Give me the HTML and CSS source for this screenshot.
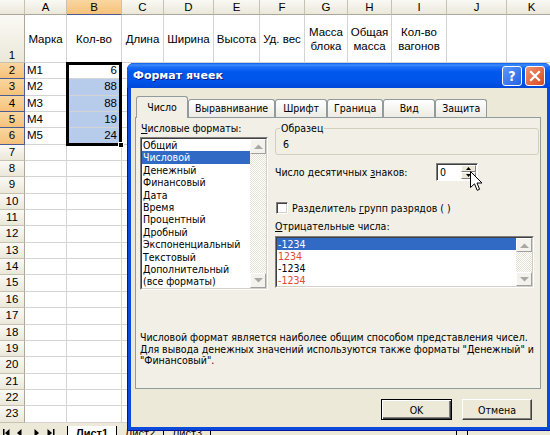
FILE: index.html
```html
<!DOCTYPE html>
<html lang="ru">
<head>
<meta charset="utf-8">
<title>Формат ячеек</title>
<link rel="stylesheet" href="styles.css">
</head>
<body>
<div class="excel">
  <div class="sheet">
    <div class="ch"></div><div class="ch">A</div><div class="ch on">B</div><div class="ch">C</div><div class="ch">D</div><div class="ch">E</div><div class="ch">F</div><div class="ch">G</div><div class="ch">H</div><div class="ch">I</div><div class="ch">J</div><div class="ch">K</div>
    <div class="rh r1h">1</div><div class="r1">Марка</div><div class="r1">Кол-во</div><div class="r1">Длина</div><div class="r1">Ширина</div><div class="r1">Высота</div><div class="r1">Уд. вес</div><div class="r1">Масса<br>блока</div><div class="r1">Общая<br>масса</div><div class="r1">Кол-во<br>вагонов</div><div class="r1"></div><div class="r1"></div>
    <div class="rh on">2</div><div>М1</div><div class="num">6</div><div></div><div></div><div></div><div></div><div></div><div></div><div></div><div></div><div></div>
    <div class="rh on">3</div><div>М2</div><div class="num hl">88</div><div></div><div></div><div></div><div></div><div></div><div></div><div></div><div></div><div></div>
    <div class="rh on">4</div><div>М3</div><div class="num hl">88</div><div></div><div></div><div></div><div></div><div></div><div></div><div></div><div></div><div></div>
    <div class="rh on">5</div><div>М4</div><div class="num hl">19</div><div></div><div></div><div></div><div></div><div></div><div></div><div></div><div></div><div></div>
    <div class="rh on">6</div><div>М5</div><div class="num hl">24</div><div></div><div></div><div></div><div></div><div></div><div></div><div></div><div></div><div></div>
    <div class="rh">7</div><div></div><div></div><div></div><div></div><div></div><div></div><div></div><div></div><div></div><div></div><div></div>
    <div class="rh">8</div><div></div><div></div><div></div><div></div><div></div><div></div><div></div><div></div><div></div><div></div><div></div>
    <div class="rh">9</div><div></div><div></div><div></div><div></div><div></div><div></div><div></div><div></div><div></div><div></div><div></div>
    <div class="rh">10</div><div></div><div></div><div></div><div></div><div></div><div></div><div></div><div></div><div></div><div></div><div></div>
    <div class="rh">11</div><div></div><div></div><div></div><div></div><div></div><div></div><div></div><div></div><div></div><div></div><div></div>
    <div class="rh">12</div><div></div><div></div><div></div><div></div><div></div><div></div><div></div><div></div><div></div><div></div><div></div>
    <div class="rh">13</div><div></div><div></div><div></div><div></div><div></div><div></div><div></div><div></div><div></div><div></div><div></div>
    <div class="rh">14</div><div></div><div></div><div></div><div></div><div></div><div></div><div></div><div></div><div></div><div></div><div></div>
    <div class="rh">15</div><div></div><div></div><div></div><div></div><div></div><div></div><div></div><div></div><div></div><div></div><div></div>
    <div class="rh">16</div><div></div><div></div><div></div><div></div><div></div><div></div><div></div><div></div><div></div><div></div><div></div>
    <div class="rh">17</div><div></div><div></div><div></div><div></div><div></div><div></div><div></div><div></div><div></div><div></div><div></div>
    <div class="rh">18</div><div></div><div></div><div></div><div></div><div></div><div></div><div></div><div></div><div></div><div></div><div></div>
    <div class="rh">19</div><div></div><div></div><div></div><div></div><div></div><div></div><div></div><div></div><div></div><div></div><div></div>
    <div class="rh">20</div><div></div><div></div><div></div><div></div><div></div><div></div><div></div><div></div><div></div><div></div><div></div>
    <div class="rh">21</div><div></div><div></div><div></div><div></div><div></div><div></div><div></div><div></div><div></div><div></div><div></div>
    <div class="rh">22</div><div></div><div></div><div></div><div></div><div></div><div></div><div></div><div></div><div></div><div></div><div></div>
    <div class="rh">23</div><div></div><div></div><div></div><div></div><div></div><div></div><div></div><div></div><div></div><div></div><div></div>
  </div>
  <div class="sel-box"><span class="fill-handle"></span></div>
  <div class="sheet-tabs">
    <svg class="sheet-nav" width="60" height="10" viewBox="0 0 60 10">
      <rect x="2" y="1" width="1.5" height="8" fill="#000"/>
      <polygon points="4,5 8.5,1 8.5,9" fill="#000"/>
      <polygon points="16,5 20.5,1 20.5,9" fill="#000"/>
      <polygon points="38,5 33.5,1 33.5,9" fill="#000"/>
      <polygon points="51,5 46.5,1 46.5,9" fill="#000"/>
      <rect x="52" y="1" width="1.5" height="8" fill="#000"/>
    </svg>
    <span class="stab active">Лист1</span>
    <span class="stab">Лист2</span>
    <span class="stab">Лист3</span>
    <span class="hscroll-btn"></span>
  </div>
</div>

<div class="dialog">
  <div class="titlebar">
    <span class="title">Формат ячеек</span>
    <span class="tb-btn help">?</span>
    <span class="tb-btn close">
      <svg width="12" height="12" viewBox="0 0 12 12"><path d="M2 2 L10 10 M10 2 L2 10" stroke="#fff" stroke-width="2.2" stroke-linecap="square"/></svg>
    </span>
  </div>
  <div class="dlg-body">
    <div class="tabs">
      <div class="tab active">Число</div>
      <div class="tab">Выравнивание</div>
      <div class="tab">Шрифт</div>
      <div class="tab">Граница</div>
      <div class="tab">Вид</div>
      <div class="tab">Защита</div>
    </div>
    <div class="panel">
      <div class="col-left">
        <div class="lbl"><u>Ч</u>исловые форматы:</div>
        <div class="listbox fmt-list">
          <div class="lb-in">
            <ul class="items">
              <li>Общий</li>
              <li class="selected">Числовой</li>
              <li>Денежный</li>
              <li>Финансовый</li>
              <li>Дата</li>
              <li>Время</li>
              <li>Процентный</li>
              <li>Дробный</li>
              <li>Экспоненциальный</li>
              <li>Текстовый</li>
              <li>Дополнительный</li>
              <li>(все форматы)</li>
            </ul>
            <div class="vscroll">
              <span class="sb-btn"><svg width="9" height="5" viewBox="0 0 9 5"><polygon points="0,5 4.5,0.5 9,5" fill="#A9A8A2"/></svg></span>
              <span class="sb-track"></span>
              <span class="sb-btn"><svg width="9" height="5" viewBox="0 0 9 5"><polygon points="0,0 4.5,4.5 9,0" fill="#A9A8A2"/></svg></span>
            </div>
          </div>
        </div>
      </div>
      <div class="col-right">
        <fieldset class="sample">
          <legend>Образец</legend>
          <div class="sample-val">6</div>
        </fieldset>
        <div class="spin-row">
          <span class="spin-lbl">Число десятичных <u>з</u>наков:</span>
          <div class="spin">
            <span class="spin-val">0</span>
            <span class="spin-btns">
              <span class="sp"><svg width="5" height="3" viewBox="0 0 5 3"><polygon points="0,3 2.5,0 5,3" fill="#000"/></svg></span>
              <span class="sp"><svg width="5" height="3" viewBox="0 0 5 3"><polygon points="0,0 2.5,3 5,0" fill="#000"/></svg></span>
            </span>
          </div>
        </div>
        <div class="check-row"><span class="checkbox"></span><span class="check-lbl">Разделитель <u>г</u>рупп разрядов ( )</span></div>
        <div class="lbl neg-lbl"><u>О</u>трицательные числа:</div>
        <div class="listbox neg-list">
          <div class="lb-in">
            <ul class="items">
              <li class="selected">-1234</li>
              <li class="red">1234</li>
              <li>-1234</li>
              <li class="red">-1234</li>
            </ul>
            <div class="vscroll">
              <span class="sb-btn"><svg width="9" height="5" viewBox="0 0 9 5"><polygon points="0,5 4.5,0.5 9,5" fill="#A9A8A2"/></svg></span>
              <span class="sb-track"></span>
              <span class="sb-btn"><svg width="9" height="5" viewBox="0 0 9 5"><polygon points="0,0 4.5,4.5 9,0" fill="#A9A8A2"/></svg></span>
            </div>
          </div>
        </div>
      </div>
      <p class="desc">Числовой формат является наиболее общим способом представления чисел.<br>Для вывода денежных значений используются также форматы "Денежный" и<br>"Финансовый".</p>
    </div>
    <div class="buttons">
      <button class="btn default">OK</button>
      <button class="btn">Отмена</button>
    </div>
  </div>
</div>

<svg class="cursor" width="13" height="21" viewBox="0 0 13 21">
  <path d="M0.5 0.5 L0.5 16.5 L4.5 12.8 L7.2 19.3 L9.6 18.3 L7 12 L12 12 Z" fill="#fff" stroke="#000" stroke-width="1" stroke-linejoin="miter"/>
</svg>
</body>
</html>
```

FILE: styles.css
```css
* { box-sizing: border-box; }
html, body { margin: 0; padding: 0; }
body {
  width: 550px;
  height: 435px;
  overflow: hidden;
  position: relative;
  background: #fff;
  font-family: "Liberation Sans", Arial, sans-serif;
}

/* ---------- spreadsheet ---------- */
.excel { position: relative; }

.sheet {
  display: grid;
  grid-template-columns: 25px 42px 55px 42px 50px 46px 45px 43px 44px 55px 60px 50px;
  grid-template-rows: 15px 48px repeat(22, 16.35px);
  font-size: 11.5px;
  color: #000;
}
.sheet > div {
  border-right: 1px solid #D4D4D4;
  border-bottom: 1px solid #D4D4D4;
  overflow: hidden;
  white-space: nowrap;
  line-height: 15px;
  padding: 0 2px;
}
.sheet > .ch {
  background: linear-gradient(#FAF9F4, #EBE8DA);
  border-right-color: #C5C2B2;
  border-bottom-color: #ACA899;
  text-align: center;
  line-height: 14px;
  padding: 0;
}
.sheet > .rh {
  background: linear-gradient(#FAF9F4, #EBE8DA);
  border-right-color: #ACA899;
  border-bottom-color: #C5C2B2;
  text-align: center;
  padding: 0;
}
.sheet > .on {
  background: linear-gradient(#F9D6A0, #F6C17A);
  border-bottom-color: #4A5C94;
}
.sheet > .rh.on { border-right-color: #4A5C94; }
.sheet > .r1h {
  display: flex;
  align-items: flex-end;
  justify-content: center;
  line-height: 14px;
}
.sheet > .r1 {
  display: flex;
  align-items: center;
  justify-content: center;
  text-align: center;
  line-height: 14px;
  padding: 0;
}
.sheet > .num { text-align: right; padding-right: 4px; }
.sheet > .hl { background: #B7CBEA; }

.sel-box {
  position: absolute;
  left: 66px;
  top: 62px;
  width: 56px;
  height: 84px;
  border: 3px solid #000;
}
.fill-handle {
  position: absolute;
  right: -5px;
  bottom: -5px;
  width: 6px;
  height: 6px;
  background: #000;
  border: 1px solid #fff;
}

.sheet-tabs {
  display: flex;
  align-items: flex-start;
  height: 14px;
  background: #ECE9D8;
  font-size: 11px;
  line-height: 12px;
  padding-top: 3px;
}
.sheet-nav { margin: 2px 6px 0 1px; flex: none; }
.stab {
  padding: 1px 8px 0;
  border-left: 1px solid #000;
  border-right: 1px solid #000;
  margin-right: -1px;
}
.stab.active { background: #fff; font-weight: bold; padding: 1px 8px 0; }
.hscroll-btn {
  margin-left: 246px;
  width: 12px;
  height: 10px;
  border: 1px solid #000;
  border-bottom: none;
  background: #ECE9D8;
}

/* ---------- dialog ---------- */
.dialog {
  position: absolute;
  left: 127px;
  top: 63px;
  width: 424px;
  height: 368px;
  display: flex;
  flex-direction: column;
  background: #0A4BDC;
  border-radius: 7px 7px 0 0;
  box-shadow: inset 1px 0 #00169C, inset 0 -1px #00169C;
  font-family: "DejaVu Sans Condensed", "DejaVu Sans", sans-serif;
  font-stretch: condensed;
  font-size: 10.5px;
  color: #000;
}
.titlebar {
  height: 25px;
  flex: none;
  display: flex;
  align-items: center;
  padding: 0 6px 0 6px;
  border-radius: 7px 7px 0 0;
  background: linear-gradient(#0A5CE6 0, #3D8EFF 2px, #1C6EF5 4px, #0058EE 9px, #0055EA 17px, #0047D9 25px);
}
.title {
  flex: 1;
  color: #fff;
  font-family: "DejaVu Sans", sans-serif;
  font-stretch: normal;
  font-weight: bold;
  font-size: 11px;
  text-shadow: 1px 1px #0A1883;
}
.tb-btn {
  width: 20px;
  height: 20px;
  border: 1px solid #fff;
  border-radius: 3px;
  display: flex;
  align-items: center;
  justify-content: center;
  color: #fff;
  font-family: "DejaVu Sans", sans-serif;
  font-weight: bold;
  font-size: 14px;
  line-height: 1;
}
.help { background: linear-gradient(135deg, #5B98FA, #2562E2); margin-right: 3px; }
.close { background: linear-gradient(135deg, #EE9472, #D8491F); }

.dlg-body {
  flex: 1;
  margin: 0 4px 4px 4px;
  background: #ECE9D8;
  display: flex;
  flex-direction: column;
  padding: 8px 6px 7px 4px;
}

.tabs {
  display: flex;
  align-items: flex-end;
  height: 21px;
  padding-left: 1px;
}
.tab {
  height: 18px;
  min-width: 52px;
  padding: 0 6px;
  text-align: center;
  line-height: 17px;
  white-space: nowrap;
  border: 1px solid #919B9C;
  border-bottom: none;
  border-radius: 3px 3px 0 0;
  background: linear-gradient(#FFFFFF, #ECEBE5);
}
.tab.active {
  height: 22px;
  margin-bottom: -1px;
  line-height: 20px;
  background: #F1EFE6;
  position: relative;
  z-index: 1;
}

.panel {
  height: 272px;
  flex: none;
  border: 1px solid #919B9C;
  background: #F1EFE6;
  display: grid;
  grid-template-columns: 128px 1fr;
  grid-template-rows: auto 1fr;
  align-items: start;
  column-gap: 7px;
  padding: 4px 1px 0 4px;
}
.lbl { line-height: 13px; white-space: nowrap; }
.col-left .lbl { padding-left: 1px; }

.listbox {
  border: 1px solid;
  border-color: #808080 #FFFFFF #FFFFFF #808080;
}
.lb-in {
  display: flex;
  height: 100%;
  border: 1px solid;
  border-color: #404040 #D4D0C8 #D4D0C8 #404040;
  background: #fff;
}
.items {
  list-style: none;
  margin: 0;
  padding: 0;
  flex: 1;
  overflow: hidden;
}
.items li {
  white-space: nowrap;
  padding-left: 1px;
}
.items li.selected { background: #316AC5; color: #fff; }
.items li.red { color: #E4472A; }

.fmt-list { margin-top: 2px; height: 153px; }
.fmt-list .items li { height: 12.4px; line-height: 12.4px; }

.vscroll {
  width: 16px;
  flex: none;
  display: flex;
  flex-direction: column;
}
.sb-btn {
  height: 15px;
  flex: none;
  display: flex;
  align-items: center;
  justify-content: center;
  background: #F3F2EC;
  border: 1px solid;
  border-color: #FFFFFF #A0A0A0 #A0A0A0 #FFFFFF;
}
.sb-track {
  flex: 1;
  background: repeating-conic-gradient(#FFFFFF 0 25%, #E6E3D6 0 50%) 0 0 / 2px 2px;
}

.col-right { display: flex; flex-direction: column; }

.sample {
  margin: 0;
  padding: 4px 4px 4px 4px;
  border: 1px solid #D0D0BF;
  border-radius: 3px;
  min-width: 0;
}
.sample legend {
  padding: 0 1px;
  line-height: 12px;
}
.sample-val { line-height: 12px; padding-left: 3px; }

.spin-row {
  display: flex;
  align-items: center;
  margin-top: 8px;
  height: 18px;
}
.spin-lbl { flex: 0 0 161px; white-space: nowrap; }
.spin {
  width: 42px;
  height: 18px;
  display: flex;
  background: #fff;
  border: 1px solid;
  border-color: #808080 #FFFFFF #FFFFFF #808080;
  box-shadow: inset 1px 1px #404040;
}
.spin-val { flex: 1; padding: 2px 0 0 3px; line-height: 13px; }
.spin-btns {
  width: 15px;
  display: flex;
  flex-direction: column;
  margin: 1px 1px 1px 0;
}
.sp {
  flex: 1;
  display: flex;
  align-items: center;
  justify-content: center;
  background: #ECE9D8;
  border: 1px solid;
  border-color: #FFFFFF #808080 #808080 #FFFFFF;
}

.check-row {
  display: flex;
  align-items: center;
  gap: 4px;
  margin-top: 20px;
  height: 14px;
  padding-left: 1px;
  white-space: nowrap;
}
.checkbox {
  width: 12px;
  height: 12px;
  flex: none;
  background: #fff;
  border: 1px solid;
  border-color: #808080 #FFFFFF #FFFFFF #808080;
  box-shadow: inset 1px 1px #404040, inset -1px -1px #D4D0C8;
}
.neg-lbl { margin-top: 5px; }
.neg-list { margin-top: 3px; height: 52px; width: 259px; }
.neg-list .items li { height: 12px; line-height: 12px; }
.neg-list .sb-btn { height: 14px; }

.desc {
  grid-column: 1 / -1;
  margin: 42px 0 0;
  line-height: 11.5px;
  white-space: nowrap;
}

.buttons {
  display: flex;
  justify-content: flex-end;
  gap: 10px;
  margin-top: 10px;
  padding-right: 9px;
}
.btn {
  width: 70px;
  height: 21px;
  padding: 0;
  font: inherit;
  color: #000;
  background: #ECE9D8;
  border: 1px solid;
  border-color: #FFFFFF #404040 #404040 #FFFFFF;
  box-shadow: inset -1px -1px #808080;
}
.btn.default {
  width: 71px;
  border-color: #000;
  box-shadow: inset 1px 1px #FFFFFF, inset -1px -1px #404040, inset -2px -2px #808080;
}

.cursor {
  position: absolute;
  left: 470px;
  top: 171px;
}
```
